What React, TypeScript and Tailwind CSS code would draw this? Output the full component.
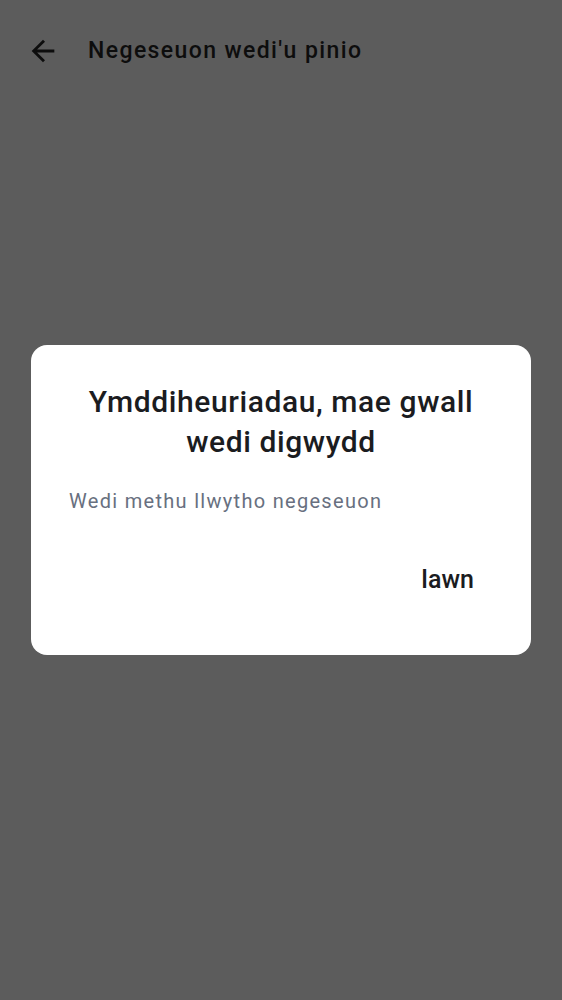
export default function App() {
  return (
    <main
      className="relative flex h-[1000px] w-[562px] flex-col bg-[#5c5c5c]"
      style={{ fontFamily: "Roboto, 'Noto Sans', sans-serif" }}
    >
      <header className="flex h-[100px] items-center px-[26px] pt-[2px]">
        <svg viewBox="0 0 24 24" className="h-[34px] w-[34px] fill-[#0d0d0d]">
          <path d="M20 11H7.83l5.59-5.59L12 4l-8 8 8 8 1.41-1.41L7.83 13H20v-2z" />
        </svg>
        <h1 className="ml-[28px] text-[23px] font-medium tracking-[1.4px] text-[#0d0d0d]">
          Negeseuon wedi'u pinio
        </h1>
      </header>

      <div className="absolute inset-0 flex items-center justify-center">
        <section className="h-[310px] w-[500px] rounded-[16px] bg-white px-[38px] pt-[37px]">
          <h2 className="text-center text-[30px] leading-[39.5px] font-medium tracking-[0.6px] text-[#1b1c1f]">
            Ymddiheuriadau, mae gwall wedi digwydd
          </h2>
          <p className="mt-[25.5px] text-[20px] leading-[28px] tracking-[1.3px] text-[#687080]">
            Wedi methu llwytho negeseuon
          </p>
          <div className="mt-[49px] flex justify-end">
            <button className="pr-[19px] text-[25px] leading-[32px] font-medium text-[#1b1c1f]">
              Iawn
            </button>
          </div>
        </section>
      </div>
    </main>
  );
}
